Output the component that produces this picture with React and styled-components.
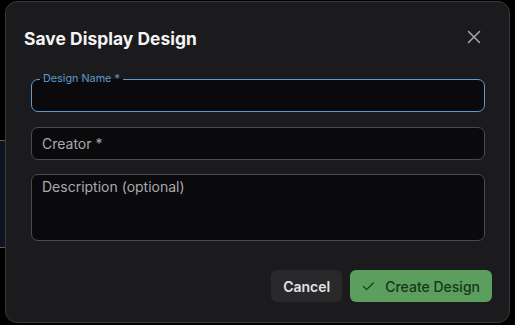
import React from "react";
import styled, { createGlobalStyle } from "styled-components";

const Global = createGlobalStyle`
  html, body { margin: 0; padding: 0; background: #000; }
  body { font-family: Inter, "Noto Sans", sans-serif; width: 515px; height: 325px; overflow: hidden; }
  * { box-sizing: border-box; }
`;

const Page = styled.div`
  position: relative;
  width: 515px;
  height: 325px;
  background: #000;
`;

const BehindPanel = styled.div`
  position: absolute;
  left: -20px;
  top: 140px;
  width: 40px;
  height: 108px;
  background: #0c1422;
  border-top: 1px solid #6b5a3a;
  border-bottom: 1px solid #6b5a3a;
`;

const Dialog = styled.div`
  position: absolute;
  left: 5px;
  top: 1px;
  width: 505px;
  height: 322px;
  background: #1b1b1d;
  border: 1px solid #38383a;
  border-radius: 12px;
  display: flex;
  flex-direction: column;
  padding: 0 17px 20px 18px;
`;

const Header = styled.div`
  display: flex;
  align-items: center;
  justify-content: space-between;
  height: 72px;
  padding: 0 9px 0 0;
`;

const Title = styled.h2`
  margin: 0;
  color: #f4f4f5;
  font-size: 17.4px;
  font-weight: 700;
  letter-spacing: 0.05px;
  margin-top: 0;
`;

const CloseButton = styled.button`
  background: none;
  border: none;
  padding: 0;
  width: 18px;
  height: 18px;
  margin-top: -3px;
  color: #a8a8ab;
  display: flex;
  align-items: center;
  justify-content: center;
  cursor: pointer;
`;

const Form = styled.div`
  display: flex;
  flex-direction: column;
  gap: 14.5px;
  padding: 5px 7px 0 7px;
`;

const Field = styled.div`
  position: relative;
  height: ${p => p.$h}px;
  background: #0a0a0c;
  border: 1px solid ${p => (p.$focused ? "#5c9ccc" : "#4a4a4d")};
  border-radius: 7px;
  padding: ${p => (p.$multi ? "3px 10px" : "0 10px")};
  display: flex;
  align-items: ${p => (p.$multi ? "flex-start" : "center")};
  color: #a9a9ad;
  font-size: 14px;
`;

const FloatLabel = styled.span`
  position: absolute;
  left: 8px;
  top: -8px;
  padding: 0 3px;
  font-size: 10.8px;
  line-height: 14px;
  color: #5c9ccc;
  background: linear-gradient(to bottom, #1b1b1d 0 50%, #0a0a0c 50% 100%);
`;

const Footer = styled.div`
  margin-top: auto;
  display: flex;
  justify-content: flex-end;
  gap: 8px;
`;

const Button = styled.button`
  height: 32px;
  border: none;
  border-radius: 6px;
  font-family: inherit;
  font-size: 14px;
  font-weight: ${p => (p.$primary ? 500 : 600)};
  padding: ${p => (p.$primary ? "0 12px 0 11px" : "0 12px")};
  background: ${p => (p.$primary ? "#5b9e5e" : "#29292c")};
  color: ${p => (p.$primary ? "#163816" : "#e2e2e4")};
  display: flex;
  align-items: center;
  gap: 9px;
  cursor: pointer;
`;

export default function App() {
  return (
    <Page>
      <Global />
      <BehindPanel />
      <Dialog>
        <Header>
          <Title>Save Display Design</Title>
          <CloseButton aria-label="Close">
            <svg width="14" height="14" viewBox="0 0 14 14" fill="none" stroke="currentColor" strokeWidth="1.5" strokeLinecap="round">
              <path d="M1.5 1.5 L12.5 12.5 M12.5 1.5 L1.5 12.5" />
            </svg>
          </CloseButton>
        </Header>
        <Form>
          <Field $h={33} $focused>
            <FloatLabel>Design Name *</FloatLabel>
          </Field>
          <Field $h={33}>Creator *</Field>
          <Field $h={67} $multi>Description (optional)</Field>
        </Form>
        <Footer>
          <Button>Cancel</Button>
          <Button $primary>
            <svg width="15" height="15" viewBox="0 0 24 24" fill="none" stroke="currentColor" strokeWidth="1.7" strokeLinecap="round" strokeLinejoin="round">
              <path d="M20 6 9 17l-5-5" />
            </svg>
            Create Design
          </Button>
        </Footer>
      </Dialog>
    </Page>
  );
}
